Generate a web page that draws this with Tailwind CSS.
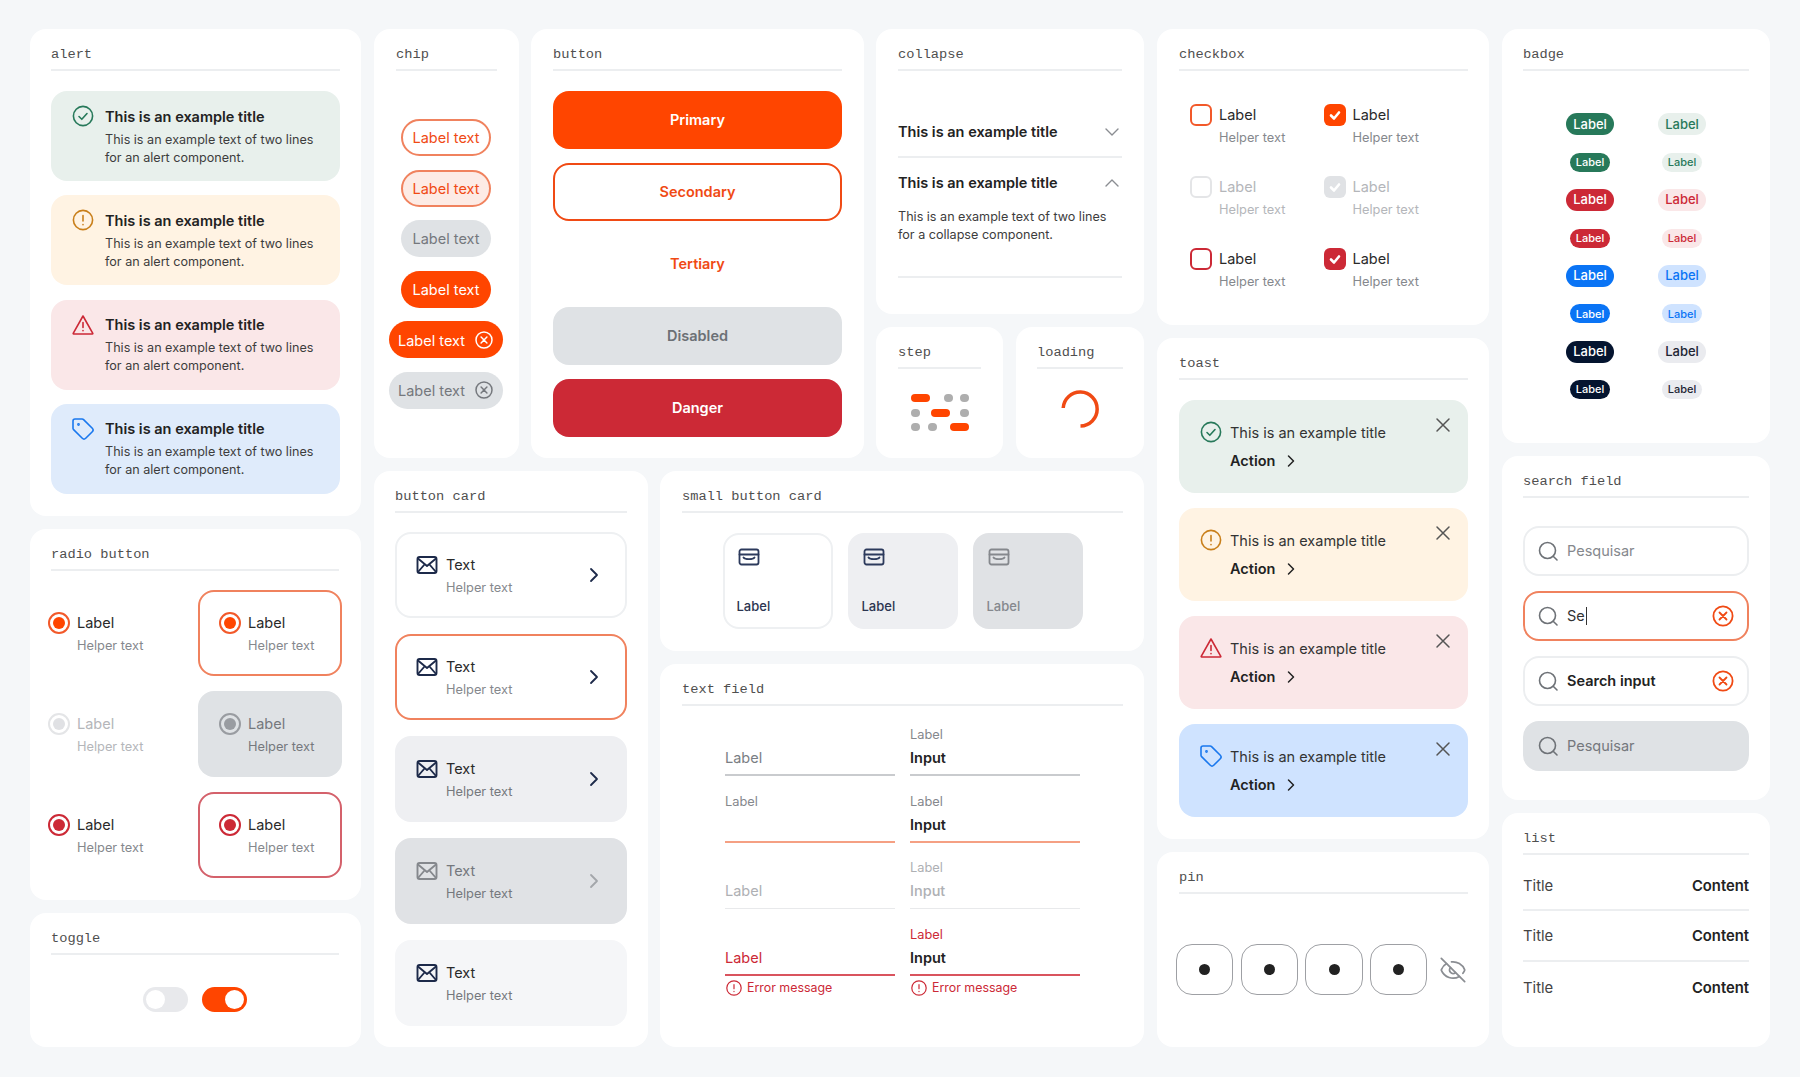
<!DOCTYPE html>
<html lang="en">

<head>
    <meta charset="UTF-8" />
    <meta name="viewport" content="width=device-width, initial-scale=1.0" />
    <title>Design system components</title>
    <script src="https://cdn.jsdelivr.net/npm/@tailwindcss/browser@4"></script>
</head>

<body class="bg-[#f5f7f9] font-['Inter',sans-serif] text-[#222] h-[1077px] overflow-hidden">
    <!-- shared icons -->
    <svg class="hidden">
        <symbol id="i-check" viewBox="0 0 24 24" fill="none" stroke="currentColor" stroke-width="1.6" stroke-linecap="round" stroke-linejoin="round"><circle cx="12" cy="12" r="9.6"/><path d="m8 12.5 2.8 2.8L16 9.5"/></symbol>
        <symbol id="i-info" viewBox="0 0 24 24" fill="none" stroke="currentColor" stroke-width="1.6" stroke-linecap="round" stroke-linejoin="round"><circle cx="12" cy="12" r="9.6"/><path d="M12 7.5v5.5M12 16.5v.2"/></symbol>
        <symbol id="i-warn" viewBox="0 0 24 24" fill="none" stroke="currentColor" stroke-width="1.6" stroke-linecap="round" stroke-linejoin="round"><path d="M12 3 2.2 20.4a.5.5 0 0 0 .4.6h18.8a.5.5 0 0 0 .4-.6z"/><path d="M12 9.5v5M12 17.6v.2"/></symbol>
        <symbol id="i-tag" viewBox="0 0 24 24" fill="none" stroke="currentColor" stroke-width="1.6" stroke-linecap="round" stroke-linejoin="round"><path d="M12.586 2.586A2 2 0 0 0 11.172 2H4a2 2 0 0 0-2 2v7.172a2 2 0 0 0 .586 1.414l8.704 8.704a2.426 2.426 0 0 0 3.42 0l6.58-6.58a2.426 2.426 0 0 0 0-3.42z"/><circle cx="7.5" cy="7.5" r=".6"/></symbol>
        <symbol id="i-mail" viewBox="0 0 24 24" fill="none" stroke="currentColor" stroke-width="1.9" stroke-linecap="round" stroke-linejoin="round"><rect x="2.5" y="4" width="19" height="16" rx="2"/><path d="m3 5.5 9 7.5 9-7.5M3 19l6.5-7.5M21 19l-6.5-7.5"/></symbol>
        <symbol id="i-tray" viewBox="0 0 24 24" fill="none" stroke="currentColor" stroke-width="1.8" stroke-linecap="round" stroke-linejoin="round"><rect x="2.5" y="4.5" width="19" height="15" rx="2"/><path d="M2.5 9.5h19M6.5 12.5c1.5 2.2 9.5 2.2 11 0"/></symbol>
        <symbol id="i-right" viewBox="0 0 24 24" fill="none" stroke="currentColor" stroke-width="1.8" stroke-linecap="round" stroke-linejoin="round"><path d="m9 18 6-6-6-6"/></symbol>
        <symbol id="i-down" viewBox="0 0 24 24" fill="none" stroke="currentColor" stroke-width="1.4" stroke-linecap="round" stroke-linejoin="round"><path d="m6 9 6 6 6-6"/></symbol>
        <symbol id="i-up" viewBox="0 0 24 24" fill="none" stroke="currentColor" stroke-width="1.4" stroke-linecap="round" stroke-linejoin="round"><path d="m6 15 6-6 6 6"/></symbol>
        <symbol id="i-x" viewBox="0 0 24 24" fill="none" stroke="currentColor" stroke-width="1.5" stroke-linecap="round" stroke-linejoin="round"><path d="M18 6 6 18M6 6l12 12"/></symbol>
        <symbol id="i-xc" viewBox="0 0 24 24" fill="none" stroke="currentColor" stroke-width="1.8" stroke-linecap="round" stroke-linejoin="round"><circle cx="12" cy="12" r="9.6"/><path d="m15.5 8.5-7 7M8.5 8.5l7 7"/></symbol>
        <symbol id="i-search" viewBox="0 0 24 24" fill="none" stroke="currentColor" stroke-width="1.6" stroke-linecap="round" stroke-linejoin="round"><circle cx="11.5" cy="11.5" r="8"/><path d="m21 21-3.8-3.8"/></symbol>
        <symbol id="i-eye" viewBox="0 0 24 24" fill="none" stroke="currentColor" stroke-width="1.5" stroke-linecap="round" stroke-linejoin="round"><path d="M10.733 5.076a10.744 10.744 0 0 1 11.205 6.575 1 1 0 0 1 0 .696 10.747 10.747 0 0 1-1.444 2.49"/><path d="M14.084 14.158a3 3 0 0 1-4.242-4.242"/><path d="M17.479 17.499a10.75 10.75 0 0 1-15.417-5.151 1 1 0 0 1 0-.696 10.75 10.75 0 0 1 4.446-5.143"/><path d="m2 2 20 20"/></symbol>
        <symbol id="i-tick" viewBox="0 0 22 22" fill="none" stroke="currentColor" stroke-width="2.6" stroke-linecap="round" stroke-linejoin="round"><path d="m7 11.5 3 3 5-6"/></symbol>
    </svg>

    <div class="flex gap-[13px] pl-[30px] pt-[29px]">

        <!-- column 1 -->
        <div class="w-[331px] flex flex-col gap-[13px]">
            <section class="h-[487px] rounded-2xl bg-white pt-3 px-[21px]">
                <h2 class="h-[31px] -translate-y-px border-b-2 border-[#eceef0] font-['Liberation_Mono',monospace] text-[13.7px] leading-[29px] text-[#4f4f4f]">alert</h2>
                <div class="mt-[19px] flex flex-col gap-[14.3px]">
                    <div class="h-[90px] rounded-2xl bg-[#e8f0ec] flex gap-[10px] pl-5 pt-[15.5px]">
                        <svg class="w-6 h-6 -mt-[2.5px] text-[#27795a]"><use href="#i-check"/></svg>
                        <div>
                            <p class="text-[14.5px] leading-5 font-semibold text-[#222]">This is an example title</p>
                            <p class="mt-1 text-[12.6px] leading-[18px] text-[#3d3d3d]">This is an example text of two lines<br>for an alert component.</p>
                        </div>
                    </div>
                    <div class="h-[90px] rounded-2xl bg-[#fff3e3] flex gap-[10px] pl-5 pt-[15.5px]">
                        <svg class="w-6 h-6 -mt-[2.5px] text-[#c97f1a]"><use href="#i-info"/></svg>
                        <div>
                            <p class="text-[14.5px] leading-5 font-semibold text-[#222]">This is an example title</p>
                            <p class="mt-1 text-[12.6px] leading-[18px] text-[#3d3d3d]">This is an example text of two lines<br>for an alert component.</p>
                        </div>
                    </div>
                    <div class="h-[90px] rounded-2xl bg-[#fae7e8] flex gap-[10px] pl-5 pt-[15.5px]">
                        <svg class="w-6 h-6 -mt-[2.5px] text-[#cc2936]"><use href="#i-warn"/></svg>
                        <div>
                            <p class="text-[14.5px] leading-5 font-semibold text-[#222]">This is an example title</p>
                            <p class="mt-1 text-[12.6px] leading-[18px] text-[#3d3d3d]">This is an example text of two lines<br>for an alert component.</p>
                        </div>
                    </div>
                    <div class="h-[90px] rounded-2xl bg-[#dfebfb] flex gap-[10px] pl-5 pt-[15.5px]">
                        <svg class="w-6 h-6 -mt-[2.5px] text-[#1a78ee]"><use href="#i-tag"/></svg>
                        <div>
                            <p class="text-[14.5px] leading-5 font-semibold text-[#222]">This is an example title</p>
                            <p class="mt-1 text-[12.6px] leading-[18px] text-[#3d3d3d]">This is an example text of two lines<br>for an alert component.</p>
                        </div>
                    </div>
                </div>
            </section>

            <section class="h-[371px] rounded-2xl bg-white pt-3 pl-[21px] pr-[22px]">
                <h2 class="h-[31px] -translate-y-px border-b-2 border-[#eceef0] font-['Liberation_Mono',monospace] text-[13.7px] leading-[29px] text-[#4f4f4f]">radio button</h2>
                <div class="mt-[18px] -ml-[3px] grid grid-cols-[150px_144px] auto-rows-[86px] gap-y-[15px]">
                    <div class="flex items-center gap-[7px]">
                        <span class="self-start mt-[22px] shrink-0 w-[22px] h-[22px] rounded-full border-2 border-[#f2592a] flex items-center justify-center"><span class="w-3 h-3 rounded-full bg-[#ff4500]"></span></span>
                        <div><p class="text-[14.5px] leading-[22px] text-[#2a2a2a]">Label</p><p class="mt-[3px] text-[12.8px] leading-[18px] text-[#85888d]">Helper text</p></div>
                    </div>
                    <div class="flex items-center gap-[7px] pl-[19px] rounded-2xl border-2 border-[#f0825e]">
                        <span class="self-start mt-[20px] shrink-0 w-[22px] h-[22px] rounded-full border-2 border-[#f2592a] flex items-center justify-center"><span class="w-3 h-3 rounded-full bg-[#ff4500]"></span></span>
                        <div><p class="text-[14.5px] leading-[22px] text-[#2a2a2a]">Label</p><p class="mt-[3px] text-[12.8px] leading-[18px] text-[#85888d]">Helper text</p></div>
                    </div>
                    <div class="flex items-center gap-[7px]">
                        <span class="self-start mt-[22px] shrink-0 w-[22px] h-[22px] rounded-full border-2 border-[#e4e5e7] flex items-center justify-center"><span class="w-3 h-3 rounded-full bg-[#e0e1e4]"></span></span>
                        <div><p class="text-[14.5px] leading-[22px] text-[#b4b6ba]">Label</p><p class="mt-[3px] text-[12.8px] leading-[18px] text-[#b4b6ba]">Helper text</p></div>
                    </div>
                    <div class="flex items-center gap-[7px] pl-[21px] rounded-2xl bg-[#dfe2e5]">
                        <span class="self-start mt-[22px] shrink-0 w-[22px] h-[22px] rounded-full border-2 border-[#999ca1] flex items-center justify-center"><span class="w-3 h-3 rounded-full bg-[#999ca1]"></span></span>
                        <div><p class="text-[14.5px] leading-[22px] text-[#75787d]">Label</p><p class="mt-[3px] text-[12.8px] leading-[18px] text-[#75787d]">Helper text</p></div>
                    </div>
                    <div class="flex items-center gap-[7px]">
                        <span class="self-start mt-[22px] shrink-0 w-[22px] h-[22px] rounded-full border-2 border-[#cc2936] flex items-center justify-center"><span class="w-3 h-3 rounded-full bg-[#cc2936]"></span></span>
                        <div><p class="text-[14.5px] leading-[22px] text-[#2a2a2a]">Label</p><p class="mt-[3px] text-[12.8px] leading-[18px] text-[#85888d]">Helper text</p></div>
                    </div>
                    <div class="flex items-center gap-[7px] pl-[19px] rounded-2xl border-2 border-[#d4616b]">
                        <span class="self-start mt-[20px] shrink-0 w-[22px] h-[22px] rounded-full border-2 border-[#cc2936] flex items-center justify-center"><span class="w-3 h-3 rounded-full bg-[#cc2936]"></span></span>
                        <div><p class="text-[14.5px] leading-[22px] text-[#2a2a2a]">Label</p><p class="mt-[3px] text-[12.8px] leading-[18px] text-[#85888d]">Helper text</p></div>
                    </div>
                </div>
            </section>

            <section class="h-[134px] rounded-2xl bg-white pt-3 pl-[21px] pr-[22px]">
                <h2 class="h-[31px] -translate-y-px border-b-2 border-[#eceef0] font-['Liberation_Mono',monospace] text-[13.7px] leading-[29px] text-[#4f4f4f]">toggle</h2>
                <div class="mt-[31px] flex justify-center gap-[14px]">
                    <span class="w-[45px] h-[25px] rounded-full bg-[#e8e9ec] p-[3px] flex justify-start"><span class="w-[19px] h-[19px] rounded-full bg-white"></span></span>
                    <span class="w-[45px] h-[25px] rounded-full bg-[#ff4500] p-[3px] flex justify-end"><span class="w-[19px] h-[19px] rounded-full bg-white"></span></span>
                </div>
            </section>
        </div>

        <!-- middle group -->
        <div class="w-[770px] flex flex-col gap-[13px]">
            <div class="h-[429px] flex gap-3">
                <section class="w-[145px] rounded-2xl bg-white pt-3 px-[22px]">
                    <h2 class="h-[31px] -translate-y-px border-b-2 border-[#eceef0] font-['Liberation_Mono',monospace] text-[13.7px] leading-[29px] text-[#4f4f4f]">chip</h2>
                    <div class="mt-[47px] -ml-px flex flex-col items-center gap-[13.6px] text-[14.5px]">
                        <span class="h-[37px] w-[90px] pt-px rounded-full border-2 border-[#f0825e] text-[#f04a14] flex items-center justify-center">Label text</span>
                        <span class="h-[37px] w-[90px] pt-px rounded-full border-2 border-[#f0825e] bg-[#fdebe5] text-[#f04a14] flex items-center justify-center">Label text</span>
                        <span class="h-[37px] w-[90px] pt-px rounded-full bg-[#dfe2e5] text-[#75787d] flex items-center justify-center">Label text</span>
                        <span class="h-[37px] w-[90px] pt-px rounded-full bg-[#ff4500] text-white flex items-center justify-center">Label text</span>
                        <span class="h-[37px] w-[114px] shrink-0 rounded-full bg-[#ff4500] text-white flex items-center justify-center gap-[9px]"><span class="pt-px">Label text</span><svg class="w-5 h-5"><use href="#i-xc"/></svg></span>
                        <span class="h-[37px] w-[114px] shrink-0 rounded-full bg-[#dfe2e5] text-[#75787d] flex items-center justify-center gap-[9px]"><span class="pt-px">Label text</span><svg class="w-5 h-5"><use href="#i-xc"/></svg></span>
                    </div>
                </section>

                <section class="w-[333px] rounded-2xl bg-white pt-3 px-[22px]">
                    <h2 class="h-[31px] -translate-y-px border-b-2 border-[#eceef0] font-['Liberation_Mono',monospace] text-[13.7px] leading-[29px] text-[#4f4f4f]">button</h2>
                    <div class="mt-[18.5px] flex flex-col gap-[14.1px] text-[14.5px] font-semibold">
                        <button class="h-[58px] rounded-2xl bg-[#ff4500] text-white">Primary</button>
                        <button class="h-[58px] rounded-2xl border-2 border-[#f04a14] bg-white text-[#f04a14]">Secondary</button>
                        <button class="h-[58px] rounded-2xl text-[#f04a14]">Tertiary</button>
                        <button class="h-[58px] rounded-2xl bg-[#dfe2e5] text-[#6c7075]">Disabled</button>
                        <button class="h-[58px] rounded-2xl bg-[#cc2936] text-white">Danger</button>
                    </div>
                </section>

                <div class="w-[268px] flex flex-col gap-[13px]">
                    <section class="h-[285px] rounded-2xl bg-white pt-3 px-[22px]">
                        <h2 class="h-[31px] -translate-y-px border-b-2 border-[#eceef0] font-['Liberation_Mono',monospace] text-[13.7px] leading-[29px] text-[#4f4f4f]">collapse</h2>
                        <div class="pt-[50px] pb-[14px] border-b-2 border-[#eceef0] flex items-center justify-between">
                            <p class="text-[14.5px] leading-5 font-semibold text-[#222]">This is an example title</p>
                            <svg class="w-6 h-6 -my-0.5 -mr-[2px] text-[#8a8d92]"><use href="#i-down"/></svg>
                        </div>
                        <div class="pt-[15px] pb-[32px] border-b-2 border-[#eceef0]">
                            <div class="flex items-center justify-between">
                                <p class="text-[14.5px] leading-5 font-semibold text-[#222]">This is an example title</p>
                                <svg class="w-6 h-6 -my-0.5 -mr-[2px] text-[#8a8d92]"><use href="#i-up"/></svg>
                            </div>
                            <p class="mt-[15px] text-[12.6px] leading-[18px] text-[#3d3d3d]">This is an example text of two lines<br>for a collapse component.</p>
                        </div>
                    </section>
                    <div class="h-[131px] flex gap-[13px]">
                        <section class="w-[127px] rounded-2xl bg-white pt-3 px-[22px]">
                            <h2 class="h-[31px] -translate-y-px border-b-2 border-[#eceef0] font-['Liberation_Mono',monospace] text-[13.7px] leading-[29px] text-[#4f4f4f]">step</h2>
                            <div class="mt-[24px] ml-[13px] w-[58px] flex flex-col gap-[6.5px]">
                                <div class="flex items-center justify-between h-2"><span class="w-[19px] h-2 rounded-full bg-[#ff4500]"></span><span class="w-[9px] h-2 rounded-full bg-[#aeaeae] ml-[7px]"></span><span class="w-[9px] h-2 rounded-full bg-[#aeaeae]"></span></div>
                                <div class="flex items-center justify-between h-2"><span class="w-[9px] h-2 rounded-full bg-[#aeaeae]"></span><span class="w-[19px] h-2 rounded-full bg-[#ff4500]"></span><span class="w-[9px] h-2 rounded-full bg-[#aeaeae]"></span></div>
                                <div class="flex items-center justify-between h-2"><span class="w-[9px] h-2 rounded-full bg-[#aeaeae]"></span><span class="w-[9px] h-2 rounded-full bg-[#aeaeae] mr-[6px]"></span><span class="w-[19px] h-2 rounded-full bg-[#ff4500]"></span></div>
                            </div>
                        </section>
                        <section class="w-[128px] rounded-2xl bg-white pt-3 pl-[21px] pr-[21px]">
                            <h2 class="h-[31px] -translate-y-px border-b-2 border-[#eceef0] font-['Liberation_Mono',monospace] text-[13.7px] leading-[29px] text-[#4f4f4f]">loading</h2>
                            <div class="mt-[20px] flex justify-center">
                                <svg class="w-[38px] h-[38px]" viewBox="0 0 38 38" fill="none"><path d="M2.2 18A17 17 0 1 1 19.5 36" stroke="#f04a14" stroke-width="3.5"/></svg>
                            </div>
                        </section>
                    </div>
                </div>
            </div>

            <div class="h-[576px] flex gap-3">
                <section class="w-[274px] rounded-2xl bg-white pt-3 px-[21px]">
                    <h2 class="h-[31px] -translate-y-px border-b-2 border-[#eceef0] font-['Liberation_Mono',monospace] text-[13.7px] leading-[29px] text-[#4f4f4f]">button card</h2>
                    <div class="mt-[18px] flex flex-col gap-4">
                        <div class="h-[86px] rounded-2xl border-2 border-[#eef0f2] bg-white flex items-center justify-between pl-[18px] pr-[19px]">
                            <div class="mt-0.5 flex items-start gap-[7px]">
                                <svg class="w-6 h-6 -mt-0.5 text-[#1d2a4a]"><use href="#i-mail"/></svg>
                                <div><p class="text-[14.5px] leading-5 text-[#2a2a2a]">Text</p><p class="mt-1 text-[12.8px] leading-[18px] text-[#85888d]">Helper text</p></div>
                            </div>
                            <svg class="w-6 h-6 text-[#1d2a4a]"><use href="#i-right"/></svg>
                        </div>
                        <div class="h-[86px] rounded-2xl border-2 border-[#f0825e] bg-white flex items-center justify-between pl-[18px] pr-[19px]">
                            <div class="mt-0.5 flex items-start gap-[7px]">
                                <svg class="w-6 h-6 -mt-0.5 text-[#1d2a4a]"><use href="#i-mail"/></svg>
                                <div><p class="text-[14.5px] leading-5 text-[#2a2a2a]">Text</p><p class="mt-1 text-[12.8px] leading-[18px] text-[#85888d]">Helper text</p></div>
                            </div>
                            <svg class="w-6 h-6 text-[#1d2a4a]"><use href="#i-right"/></svg>
                        </div>
                        <div class="h-[86px] rounded-2xl border-2 border-[#eeeff2] bg-[#eeeff2] flex items-center justify-between pl-[18px] pr-[19px]">
                            <div class="mt-0.5 flex items-start gap-[7px]">
                                <svg class="w-6 h-6 -mt-0.5 text-[#1d2a4a]"><use href="#i-mail"/></svg>
                                <div><p class="text-[14.5px] leading-5 text-[#2a2a2a]">Text</p><p class="mt-1 text-[12.8px] leading-[18px] text-[#75787d]">Helper text</p></div>
                            </div>
                            <svg class="w-6 h-6 text-[#1d2a4a]"><use href="#i-right"/></svg>
                        </div>
                        <div class="h-[86px] rounded-2xl border-2 border-[#e0e2e5] bg-[#e0e2e5] flex items-center justify-between pl-[18px] pr-[19px]">
                            <div class="mt-0.5 flex items-start gap-[7px]">
                                <svg class="w-6 h-6 -mt-0.5 text-[#85888d]"><use href="#i-mail"/></svg>
                                <div><p class="text-[14.5px] leading-5 text-[#75787d]">Text</p><p class="mt-1 text-[12.8px] leading-[18px] text-[#75787d]">Helper text</p></div>
                            </div>
                            <svg class="w-6 h-6 text-[#a3a6aa]"><use href="#i-right"/></svg>
                        </div>
                        <div class="h-[86px] rounded-2xl border-2 border-[#f5f6f8] bg-[#f5f6f8] flex items-center justify-between pl-[18px] pr-[19px]">
                            <div class="mt-0.5 flex items-start gap-[7px]">
                                <svg class="w-6 h-6 -mt-0.5 text-[#1d2a4a]"><use href="#i-mail"/></svg>
                                <div><p class="text-[14.5px] leading-5 text-[#2a2a2a]">Text</p><p class="mt-1 text-[12.8px] leading-[18px] text-[#75787d]">Helper text</p></div>
                            </div>
                        </div>
                    </div>
                </section>

                <div class="w-[484px] flex flex-col gap-[13px]">
                    <section class="h-[180px] rounded-2xl bg-white pt-3 pl-[22px] pr-[21px]">
                        <h2 class="h-[31px] -translate-y-px border-b-2 border-[#eceef0] font-['Liberation_Mono',monospace] text-[13.7px] leading-[29px] text-[#4f4f4f]">small button card</h2>
                        <div class="mt-[18.5px] flex justify-center gap-[15px]">
                            <div class="w-[110px] h-[96px] rounded-2xl border-2 border-[#eef0f2] bg-white flex flex-col justify-between pl-[12px] pt-[10px] pb-[11px] text-[13px] leading-5 font-medium text-[#2c3550]">
                                <svg class="w-6 h-6 text-[#2c3a5c]"><use href="#i-tray"/></svg>
                                <span>Label</span>
                            </div>
                            <div class="w-[110px] h-[96px] rounded-2xl border-2 border-[#eeeff2] bg-[#eeeff2] flex flex-col justify-between pl-[12px] pt-[10px] pb-[11px] text-[13px] leading-5 font-medium text-[#2c3550]">
                                <svg class="w-6 h-6 text-[#2c3a5c]"><use href="#i-tray"/></svg>
                                <span>Label</span>
                            </div>
                            <div class="w-[110px] h-[96px] rounded-2xl border-2 border-[#e0e2e5] bg-[#e0e2e5] flex flex-col justify-between pl-[12px] pt-[10px] pb-[11px] text-[13px] leading-5 font-medium text-[#85888d]">
                                <svg class="w-6 h-6 text-[#85888d]"><use href="#i-tray"/></svg>
                                <span>Label</span>
                            </div>
                        </div>
                    </section>

                    <section class="h-[383px] rounded-2xl bg-white pt-3 pl-[22px] pr-[21px]">
                        <h2 class="h-[31px] -translate-y-px border-b-2 border-[#eceef0] font-['Liberation_Mono',monospace] text-[13.7px] leading-[29px] text-[#4f4f4f]">text field</h2>
                        <div class="mt-[19px] ml-[43px] w-[355px] grid grid-cols-[170px_170px] gap-x-[15px] gap-y-[16.6px]">
                            <div class="h-[50px] flex flex-col border-b-2 border-[#c9cbce]"><span class="h-4 text-[12.8px] leading-[18px]"></span><span class="mt-[6px] text-[14.5px] leading-5 text-[#7a7e84]">Label</span></div>
                            <div class="h-[50px] flex flex-col border-b-2 border-[#c9cbce]"><span class="h-4 text-[12.8px] leading-[18px] text-[#85888d]">Label</span><span class="mt-[6px] text-[14.5px] leading-5 font-semibold text-[#222]">Input</span></div>
                            <div class="h-[50px] flex flex-col border-b-2 border-[#f5a083]"><span class="h-4 text-[12.8px] leading-[18px] text-[#85888d]">Label</span><span class="mt-[6px] text-[14.5px] leading-5"></span></div>
                            <div class="h-[50px] flex flex-col border-b-2 border-[#f5a083]"><span class="h-4 text-[12.8px] leading-[18px] text-[#85888d]">Label</span><span class="mt-[6px] text-[14.5px] leading-5 font-semibold text-[#222]">Input</span></div>
                            <div class="h-[50px] flex flex-col border-b border-[#e8e9eb]"><span class="h-4 text-[12.8px] leading-[18px]"></span><span class="mt-[6px] text-[14.5px] leading-5 text-[#aeb0b4]">Label</span></div>
                            <div class="h-[50px] flex flex-col border-b border-[#e8e9eb]"><span class="h-4 text-[12.8px] leading-[18px] text-[#aeb0b4]">Label</span><span class="mt-[6px] text-[14.5px] leading-5 font-medium text-[#aeb0b4]">Input</span></div>
                            <div>
                                <div class="h-[50px] flex flex-col border-b-2 border-[#d9545e]"><span class="h-4 text-[12.8px] leading-[18px]"></span><span class="mt-[6px] text-[14.5px] leading-5 text-[#cc2936]">Label</span></div>
                                <p class="mt-[3px] flex items-center gap-1 text-[12.4px] leading-[18px] text-[#cc2936]"><svg class="w-[18px] h-[18px]"><use href="#i-info"/></svg>Error message</p>
                            </div>
                            <div>
                                <div class="h-[50px] flex flex-col border-b-2 border-[#d9545e]"><span class="h-4 text-[12.8px] leading-[18px] text-[#cc2936]">Label</span><span class="mt-[6px] text-[14.5px] leading-5 font-semibold text-[#222]">Input</span></div>
                                <p class="mt-[3px] flex items-center gap-1 text-[12.4px] leading-[18px] text-[#cc2936]"><svg class="w-[18px] h-[18px]"><use href="#i-info"/></svg>Error message</p>
                            </div>
                        </div>
                    </section>
                </div>
            </div>
        </div>

        <!-- column 3 -->
        <div class="w-[332px] flex flex-col gap-[13px]">
            <section class="h-[296px] rounded-2xl bg-white pt-3 pl-[22px] pr-[21px]">
                <h2 class="h-[31px] -translate-y-px border-b-2 border-[#eceef0] font-['Liberation_Mono',monospace] text-[13.7px] leading-[29px] text-[#4f4f4f]">checkbox</h2>
                <div class="mt-[32px] ml-[11px] grid grid-cols-[133.5px_1fr] gap-y-[29px]">
                    <div class="flex gap-[7px]"><span class="shrink-0 w-[22px] h-[22px] rounded-md border-2 border-[#f2592a]"></span><div class="mt-px"><p class="text-[14.5px] leading-5 text-[#2a2a2a]">Label</p><p class="mt-1 text-[12.8px] leading-[18px] text-[#85888d]">Helper text</p></div></div>
                    <div class="flex gap-[7px]"><span class="shrink-0 w-[22px] h-[22px] rounded-md bg-[#ff4500] text-white"><svg class="w-[22px] h-[22px]"><use href="#i-tick"/></svg></span><div class="mt-px"><p class="text-[14.5px] leading-5 text-[#2a2a2a]">Label</p><p class="mt-1 text-[12.8px] leading-[18px] text-[#85888d]">Helper text</p></div></div>
                    <div class="flex gap-[7px]"><span class="shrink-0 w-[22px] h-[22px] rounded-md border-2 border-[#e4e5e7]"></span><div class="mt-px"><p class="text-[14.5px] leading-5 text-[#b4b6ba]">Label</p><p class="mt-1 text-[12.8px] leading-[18px] text-[#b4b6ba]">Helper text</p></div></div>
                    <div class="flex gap-[7px]"><span class="shrink-0 w-[22px] h-[22px] rounded-md bg-[#e0e2e5] text-white"><svg class="w-[22px] h-[22px]"><use href="#i-tick"/></svg></span><div class="mt-px"><p class="text-[14.5px] leading-5 text-[#b4b6ba]">Label</p><p class="mt-1 text-[12.8px] leading-[18px] text-[#b4b6ba]">Helper text</p></div></div>
                    <div class="flex gap-[7px]"><span class="shrink-0 w-[22px] h-[22px] rounded-md border-2 border-[#cc2936]"></span><div class="mt-px"><p class="text-[14.5px] leading-5 text-[#2a2a2a]">Label</p><p class="mt-1 text-[12.8px] leading-[18px] text-[#85888d]">Helper text</p></div></div>
                    <div class="flex gap-[7px]"><span class="shrink-0 w-[22px] h-[22px] rounded-md bg-[#cc2936] text-white"><svg class="w-[22px] h-[22px]"><use href="#i-tick"/></svg></span><div class="mt-px"><p class="text-[14.5px] leading-5 text-[#2a2a2a]">Label</p><p class="mt-1 text-[12.8px] leading-[18px] text-[#85888d]">Helper text</p></div></div>
                </div>
            </section>

            <section class="h-[501px] rounded-2xl bg-white pt-3 pl-[22px] pr-[21px]">
                <h2 class="h-[31px] -translate-y-px border-b-2 border-[#eceef0] font-['Liberation_Mono',monospace] text-[13.7px] leading-[29px] text-[#4f4f4f]">toast</h2>
                <div class="mt-[19px] flex flex-col gap-[15px]">
                    <div class="h-[93px] rounded-2xl bg-[#e8f0ec] flex pl-5 pr-[15px] pt-5">
                        <svg class="shrink-0 w-6 h-6 text-[#27795a]"><use href="#i-check"/></svg>
                        <div class="ml-[7px] mt-[2.5px]">
                            <p class="text-[14.5px] leading-5 text-[#333]">This is an example title</p>
                            <p class="mt-[8.5px] flex items-center gap-1.5 text-[14.5px] leading-5 font-semibold text-[#222]">Action<svg class="w-5 h-5 text-[#222]"><use href="#i-right"/></svg></p>
                        </div>
                        <svg class="ml-auto -mt-[7px] w-6 h-6 -mr-[2px] text-[#555]"><use href="#i-x"/></svg>
                    </div>
                    <div class="h-[93px] rounded-2xl bg-[#fff3e3] flex pl-5 pr-[15px] pt-5">
                        <svg class="shrink-0 w-6 h-6 text-[#c97f1a]"><use href="#i-info"/></svg>
                        <div class="ml-[7px] mt-[2.5px]">
                            <p class="text-[14.5px] leading-5 text-[#333]">This is an example title</p>
                            <p class="mt-[8.5px] flex items-center gap-1.5 text-[14.5px] leading-5 font-semibold text-[#222]">Action<svg class="w-5 h-5 text-[#222]"><use href="#i-right"/></svg></p>
                        </div>
                        <svg class="ml-auto -mt-[7px] w-6 h-6 -mr-[2px] text-[#555]"><use href="#i-x"/></svg>
                    </div>
                    <div class="h-[93px] rounded-2xl bg-[#fae7e8] flex pl-5 pr-[15px] pt-5">
                        <svg class="shrink-0 w-6 h-6 text-[#cc2936]"><use href="#i-warn"/></svg>
                        <div class="ml-[7px] mt-[2.5px]">
                            <p class="text-[14.5px] leading-5 text-[#333]">This is an example title</p>
                            <p class="mt-[8.5px] flex items-center gap-1.5 text-[14.5px] leading-5 font-semibold text-[#222]">Action<svg class="w-5 h-5 text-[#222]"><use href="#i-right"/></svg></p>
                        </div>
                        <svg class="ml-auto -mt-[7px] w-6 h-6 -mr-[2px] text-[#555]"><use href="#i-x"/></svg>
                    </div>
                    <div class="h-[93px] rounded-2xl bg-[#cfe3ff] flex pl-5 pr-[15px] pt-5">
                        <svg class="shrink-0 w-6 h-6 text-[#1a78ee]"><use href="#i-tag"/></svg>
                        <div class="ml-[7px] mt-[2.5px]">
                            <p class="text-[14.5px] leading-5 text-[#333]">This is an example title</p>
                            <p class="mt-[8.5px] flex items-center gap-1.5 text-[14.5px] leading-5 font-semibold text-[#222]">Action<svg class="w-5 h-5 text-[#222]"><use href="#i-right"/></svg></p>
                        </div>
                        <svg class="ml-auto -mt-[7px] w-6 h-6 -mr-[2px] text-[#555]"><use href="#i-x"/></svg>
                    </div>
                </div>
            </section>

            <section class="h-[195px] rounded-2xl bg-white pt-3 pl-[22px] pr-[21px]">
                <h2 class="h-[31px] -translate-y-px border-b-2 border-[#eceef0] font-['Liberation_Mono',monospace] text-[13.7px] leading-[29px] text-[#4f4f4f]">pin</h2>
                <div class="mt-[49px] -ml-[3px] flex items-center gap-[7.3px]">
                    <span class="w-[57.4px] h-[51px] rounded-2xl border-[1.5px] border-[#9ea0a4] flex items-center justify-center"><span class="w-[11px] h-[11px] rounded-full bg-[#222]"></span></span>
                    <span class="w-[57.4px] h-[51px] rounded-2xl border-[1.5px] border-[#9ea0a4] flex items-center justify-center"><span class="w-[11px] h-[11px] rounded-full bg-[#222]"></span></span>
                    <span class="w-[57.4px] h-[51px] rounded-2xl border-[1.5px] border-[#9ea0a4] flex items-center justify-center"><span class="w-[11px] h-[11px] rounded-full bg-[#222]"></span></span>
                    <span class="w-[57.4px] h-[51px] rounded-2xl border-[1.5px] border-[#9ea0a4] flex items-center justify-center"><span class="w-[11px] h-[11px] rounded-full bg-[#222]"></span></span>
                    <svg class="ml-[4px] w-7 h-7 text-[#8a8d92]"><use href="#i-eye"/></svg>
                </div>
            </section>
        </div>

        <!-- column 4 -->
        <div class="w-[268px] flex flex-col gap-[13px]">
            <section class="h-[414px] rounded-2xl bg-white pt-3 px-[21px]">
                <h2 class="h-[31px] -translate-y-px border-b-2 border-[#eceef0] font-['Liberation_Mono',monospace] text-[13.7px] leading-[29px] text-[#4f4f4f]">badge</h2>
                <div class="mt-[33.5px] grid grid-cols-[92px_92px] auto-rows-[37.9px] justify-center justify-items-center items-center font-medium">
                    <span class="w-12 h-[22px] rounded-full bg-[#27795a] text-white text-[13px] flex items-center justify-center">Label</span>
                    <span class="w-12 h-[22px] rounded-full bg-[#e8f0ec] text-[#27795a] text-[13px] flex items-center justify-center">Label</span>
                    <span class="w-10 h-[19px] rounded-full bg-[#27795a] text-white text-[11px] flex items-center justify-center">Label</span>
                    <span class="w-10 h-[19px] rounded-full bg-[#e8f0ec] text-[#27795a] text-[11px] flex items-center justify-center">Label</span>
                    <span class="w-12 h-[22px] rounded-full bg-[#cc2936] text-white text-[13px] flex items-center justify-center">Label</span>
                    <span class="w-12 h-[22px] rounded-full bg-[#fae7e8] text-[#cc2936] text-[13px] flex items-center justify-center">Label</span>
                    <span class="w-10 h-[19px] rounded-full bg-[#cc2936] text-white text-[11px] flex items-center justify-center">Label</span>
                    <span class="w-10 h-[19px] rounded-full bg-[#fae7e8] text-[#cc2936] text-[11px] flex items-center justify-center">Label</span>
                    <span class="w-12 h-[22px] rounded-full bg-[#0a74f5] text-white text-[13px] flex items-center justify-center">Label</span>
                    <span class="w-12 h-[22px] rounded-full bg-[#cfe3ff] text-[#0a74f5] text-[13px] flex items-center justify-center">Label</span>
                    <span class="w-10 h-[19px] rounded-full bg-[#0a74f5] text-white text-[11px] flex items-center justify-center">Label</span>
                    <span class="w-10 h-[19px] rounded-full bg-[#cfe3ff] text-[#0a74f5] text-[11px] flex items-center justify-center">Label</span>
                    <span class="w-12 h-[22px] rounded-full bg-[#04142f] text-white text-[13px] flex items-center justify-center">Label</span>
                    <span class="w-12 h-[22px] rounded-full bg-[#eaebef] text-[#1d2433] text-[13px] flex items-center justify-center">Label</span>
                    <span class="w-10 h-[19px] rounded-full bg-[#04142f] text-white text-[11px] flex items-center justify-center">Label</span>
                    <span class="w-10 h-[19px] rounded-full bg-[#eaebef] text-[#1d2433] text-[11px] flex items-center justify-center">Label</span>
                </div>
            </section>

            <section class="h-[344px] rounded-2xl bg-white pt-3 px-[21px]">
                <h2 class="h-[31px] -translate-y-px border-b-2 border-[#eceef0] font-['Liberation_Mono',monospace] text-[13.7px] leading-[29px] text-[#4f4f4f]">search field</h2>
                <div class="mt-[26.5px] flex flex-col gap-[15px] text-[14.5px]">
                    <div class="h-[50px] rounded-2xl border-2 border-[#eceef0] flex items-center pl-[11px] pr-3 gap-[7px]">
                        <svg class="w-6 h-6 text-[#6e7277]"><use href="#i-search"/></svg><span class="text-[#85888d]">Pesquisar</span>
                    </div>
                    <div class="h-[50px] rounded-2xl border-2 border-[#f0825e] flex items-center pl-[11px] pr-3 gap-[7px]">
                        <svg class="w-6 h-6 text-[#6e7277]"><use href="#i-search"/></svg><span class="text-[#333]">Se</span><span class="-ml-1.5 w-px h-[18px] bg-[#333]"></span>
                        <svg class="ml-auto w-6 h-6 text-[#f04a14]"><use href="#i-xc"/></svg>
                    </div>
                    <div class="h-[50px] rounded-2xl border-2 border-[#eceef0] flex items-center pl-[11px] pr-3 gap-[7px]">
                        <svg class="w-6 h-6 text-[#6e7277]"><use href="#i-search"/></svg><span class="font-semibold text-[#222]">Search input</span>
                        <svg class="ml-auto w-6 h-6 text-[#f04a14]"><use href="#i-xc"/></svg>
                    </div>
                    <div class="h-[50px] rounded-2xl border-2 border-[#dfe2e5] bg-[#dfe2e5] flex items-center pl-[11px] pr-3 gap-[7px]">
                        <svg class="w-6 h-6 text-[#6e7277]"><use href="#i-search"/></svg><span class="text-[#75787d]">Pesquisar</span>
                    </div>
                </div>
            </section>

            <section class="h-[234px] rounded-2xl bg-white pt-3 px-[21px]">
                <h2 class="h-[31px] -translate-y-px border-b-2 border-[#eceef0] font-['Liberation_Mono',monospace] text-[13.7px] leading-[29px] text-[#4f4f4f]">list</h2>
                <div class="mt-[4.5px] text-[14.8px]">
                    <div class="h-[50.6px] pt-0.5 border-b-2 border-[#eceef0] flex items-center justify-between"><span class="text-[#444]">Title</span><span class="font-semibold text-[#222]">Content</span></div>
                    <div class="h-[50.6px] pt-0.5 border-b-2 border-[#eceef0] flex items-center justify-between"><span class="text-[#444]">Title</span><span class="font-semibold text-[#222]">Content</span></div>
                    <div class="h-[50.6px] pt-0.5 flex items-center justify-between"><span class="text-[#444]">Title</span><span class="font-semibold text-[#222]">Content</span></div>
                </div>
            </section>
        </div>
    </div>
</body>

</html>
